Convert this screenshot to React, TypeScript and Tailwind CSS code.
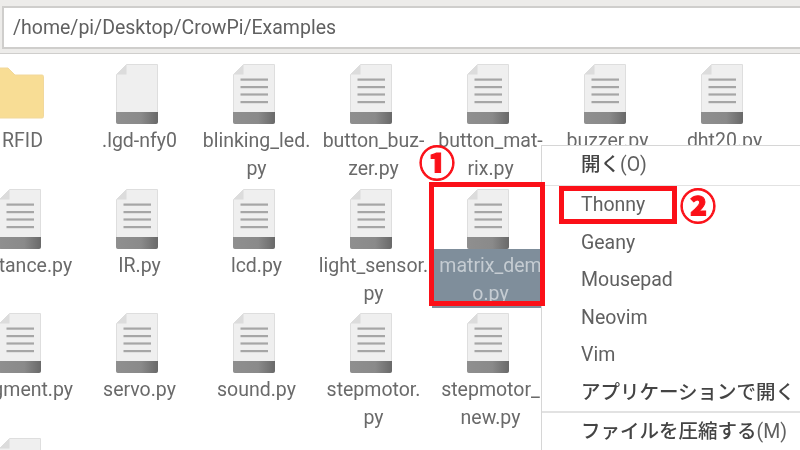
const rows: { name: string[]; kind?: 'folder' | 'blank'; selected?: boolean }[][] = [
  [
    { name: ['RFID'], kind: 'folder' },
    { name: ['.lgd-nfy0'], kind: 'blank' },
    { name: ['blinking_led.', 'py'] },
    { name: ['button_buz-', 'zer.py'] },
    { name: ['button_mat-', 'rix.py'] },
    { name: ['buzzer.py'] },
    { name: ['dht20.py'] },
  ],
  [
    { name: ['distance.py'] },
    { name: ['IR.py'] },
    { name: ['lcd.py'] },
    { name: ['light_sensor.', 'py'] },
    { name: ['matrix_dem', 'o.py'], selected: true },
  ],
  [
    { name: ['segment.py'] },
    { name: ['servo.py'] },
    { name: ['sound.py'] },
    { name: ['stepmotor.', 'py'] },
    { name: ['stepmotor_', 'new.py'] },
  ],
  [{ name: [''] }],
];

const menuItems = ['Thonny', 'Geany', 'Mousepad', 'Neovim', 'Vim'];

function FileIcon({ blank }: { blank?: boolean }) {
  return (
    <svg width="42" height="60" viewBox="0 0 42 60" className="mr-[6px] shrink-0">
      <defs>
        <linearGradient id="band" x1="0" x2="1" y1="0" y2="0">
          <stop offset="0" stopColor="#8f8f8f" />
          <stop offset="0.6" stopColor="#8a8a8a" />
          <stop offset="1" stopColor="#696969" />
        </linearGradient>
      </defs>
      <path d="M10.5 0.5H41.5V58a1.5 1.5 0 0 1-1.5 1.5H2A1.5 1.5 0 0 1 0.5 58V10.5Z" fill="#efefef" stroke="#dedede" />
      <path d="M10.5 0.5V10.5H0.5Z" fill="#dcdcdc" />
      {!blank && (
        <g fill="#a6a6a6">
          <rect x="7.5" y="14.5" width="27.5" height="2.2" />
          <rect x="7.5" y="22" width="27.5" height="2.2" />
          <rect x="7.5" y="29.4" width="27.5" height="2.2" />
          <rect x="7.5" y="37" width="27.5" height="2.2" />
        </g>
      )}
      <path d="M0 48H42V58a2 2 0 0 1-2 2H2a2 2 0 0 1-2-2Z" fill="url(#band)" />
    </svg>
  );
}

function FolderIcon() {
  return (
    <svg width="56" height="60" viewBox="0 0 56 60" className="-ml-2 mr-[6px] shrink-0">
      <path d="M2 4H20L27 11H54a1.5 1.5 0 0 1 1.5 1.5V52.5A1.5 1.5 0 0 1 54 54H2Z" fill="#f8dd95" stroke="#f1d89c" />
    </svg>
  );
}

export default function App() {
  return (
    <div className="relative h-[450px] w-[800px] overflow-hidden bg-white font-['Roboto',sans-serif] text-[19.5px] text-[#6a6a6a] blur-[0.5px]">
      {/* Path bar */}
      <div className="h-[54px] border-b border-[#cfcecc] bg-[#edecea] pl-[2px] pt-[6px]">
        <div className="flex h-[43px] items-center border-y-2 border-l-2 border-[#cfcecc] bg-white pl-[9px] text-[#606060]">
          /home/pi/Desktop/CrowPi/Examples
        </div>
      </div>

      {/* File grid */}
      <div className="ml-[-36px] flex w-[900px] flex-col pt-[10px]">
        {rows.map((row, r) => (
          <div key={r} className="grid h-[124.5px] shrink-0 grid-cols-[repeat(7,117px)]">
            {row.map((f, i) => (
              <div key={i} className="flex flex-col items-center">
                <div className="flex h-[60px] w-full justify-center">
                  {f.kind === 'folder' ? <FolderIcon /> : <FileIcon blank={f.kind === 'blank'} />}
                </div>
                <div
                  className={`w-full pt-[3px] text-center leading-[28px] whitespace-nowrap ${f.selected ? 'bg-[#7f8e9b] text-[#c5ccd2]' : ''}`}
                >
                  {f.name.map((line) => (
                    <div key={line}>{line}</div>
                  ))}
                </div>
              </div>
            ))}
          </div>
        ))}
      </div>

      {/* Context menu */}
      <div className="absolute left-[541px] top-[145px] h-[320px] w-[280px] border border-[#d6d6d6] bg-white font-['Roboto','Noto_Sans_CJK_JP',sans-serif] text-[#606060]">
        <div className="flex h-[40px] items-center border-b border-[#e2e2e2] pb-[1px] pl-[39px]">
          <span className="font-medium text-[#444]">開く</span>(O)
        </div>
        {menuItems.map((m) => (
          <div key={m} className="flex h-[37.5px] items-center pl-[39px]">
            {m}
          </div>
        ))}
        <div className="flex h-[37.5px] items-center whitespace-nowrap pl-[39px] font-medium text-[#444]">アプリケーションで開く</div>
        <div className="h-[2px] bg-[#e2e2e2]" />
        <div className="flex h-[37px] items-center whitespace-nowrap pl-[39px]">
          <span className="font-medium text-[#444]">ファイルを圧縮する</span>(M)
        </div>
      </div>

      {/* Red annotations */}
      <div className="absolute left-[429px] top-[182px] h-[124px] w-[116px] border-[5px] border-[#fb1018]" />
      <div className="absolute left-[559px] top-[186px] h-[38px] w-[118px] border-[5px] border-[#fb1018]" />
      <div className="absolute left-[417px] top-[140px] flex h-[42px] w-[40px] items-center justify-center font-['Noto_Sans_CJK_JP',sans-serif] text-[36px] leading-none font-black text-[#fb1018] [-webkit-text-stroke:1px_#fb1018]">①</div>
      <div className="absolute left-[678px] top-[183px] flex h-[42px] w-[40px] items-center justify-center font-['Noto_Sans_CJK_JP',sans-serif] text-[36px] leading-none font-black text-[#fb1018] [-webkit-text-stroke:1px_#fb1018]">②</div>
    </div>
  );
}
